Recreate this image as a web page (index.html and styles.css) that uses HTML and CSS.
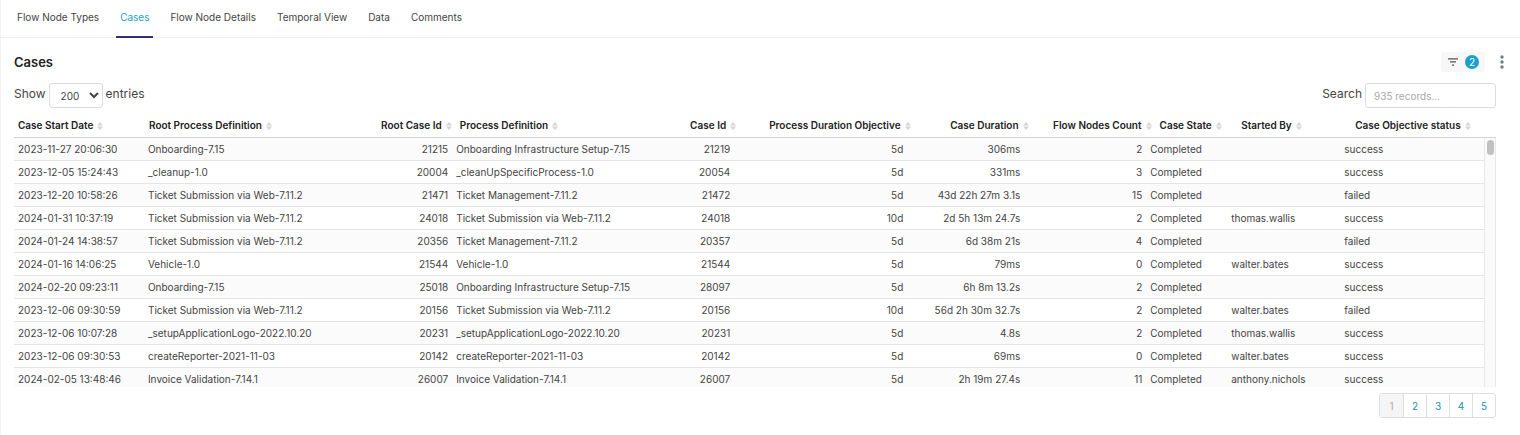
FILE: index.html
```html
<!DOCTYPE html>
<html lang="en">
<head>
<meta charset="utf-8">
<title>Cases</title>
<link rel="stylesheet" href="styles.css">
</head>
<body>
<svg class="defs" aria-hidden="true">
  <symbol id="sort" viewBox="0 0 6 8"><path d="M3 0.1L6 3.5H0zM3 7.9L0 4.5H6z"/></symbol>
</svg>
<nav class="tabs">
  <a class="tab" href="#types">Flow Node Types</a>
  <a class="tab active" href="#cases" aria-current="page">Cases</a>
  <a class="tab" href="#details">Flow Node Details</a>
  <a class="tab" href="#temporal">Temporal View</a>
  <a class="tab" href="#data">Data</a>
  <a class="tab" href="#comments">Comments</a>
</nav>
<main class="panel">
  <header class="panel-head">
    <h1 class="title">Cases</h1>
    <button class="filter" type="button" aria-label="Filters">
      <svg width="10" height="8" viewBox="0 0 10 8"><path d="M0 0.2h10v1.3H0zM2 3.3h6v1.3H2zM4 6.4h2v1.3H4z" fill="#555"/></svg>
      <span class="count">2</span>
    </button>
    <button class="more" type="button" aria-label="More options">
      <svg width="4" height="14" viewBox="0 0 4 14" fill="#6f7d87"><circle cx="2" cy="2" r="1.7"/><circle cx="2" cy="7" r="1.7"/><circle cx="2" cy="12" r="1.7"/></svg>
    </button>
  </header>
  <div class="controls">
    <label class="field">Show <select class="length"><option>200</option></select> entries</label>
    <label class="field">Search <input class="search" type="search" placeholder="935 records..."></label>
  </div>
  <table class="grid grid-head">
    <colgroup><col class="c-date"><col class="c-root"><col class="c-id"><col class="c-proc"><col class="c-id"><col class="c-obj"><col class="c-dur"><col class="c-count"><col class="c-state"><col class="c-by"><col></colgroup>
    <thead><tr>
      <th>Case Start Date<svg class="sort"><use href="#sort"/></svg></th>
      <th>Root Process Definition<svg class="sort"><use href="#sort"/></svg></th>
      <th class="num">Root Case Id<svg class="sort"><use href="#sort"/></svg></th>
      <th>Process Definition<svg class="sort"><use href="#sort"/></svg></th>
      <th class="num">Case Id<svg class="sort"><use href="#sort"/></svg></th>
      <th class="num">Process Duration Objective<svg class="sort"><use href="#sort"/></svg></th>
      <th class="num">Case Duration<svg class="sort"><use href="#sort"/></svg></th>
      <th class="num">Flow Nodes Count<svg class="sort"><use href="#sort"/></svg></th>
      <th>Case State<svg class="sort"><use href="#sort"/></svg></th>
      <th>Started By<svg class="sort"><use href="#sort"/></svg></th>
      <th>Case Objective status<svg class="sort"><use href="#sort"/></svg></th>
    </tr></thead>
  </table>
  <div class="scroll">
    <div class="view">
      <table class="grid grid-body" aria-label="Cases">
        <colgroup><col class="c-date"><col class="c-root"><col class="c-id"><col class="c-proc"><col class="c-id"><col class="c-obj"><col class="c-dur"><col class="c-count"><col class="c-state"><col class="c-by"><col></colgroup>
        <tbody>
          <tr><td>2023-11-27 20:06:30</td><td>Onboarding-7.15</td><td class="num">21215</td><td>Onboarding Infrastructure Setup-7.15</td><td class="num">21219</td><td class="num">5d</td><td class="num">306ms</td><td class="num">2</td><td>Completed</td><td></td><td>success</td></tr>
          <tr><td>2023-12-05 15:24:43</td><td>_cleanup-1.0</td><td class="num">20004</td><td>_cleanUpSpecificProcess-1.0</td><td class="num">20054</td><td class="num">5d</td><td class="num">331ms</td><td class="num">3</td><td>Completed</td><td></td><td>success</td></tr>
          <tr><td>2023-12-20 10:58:26</td><td>Ticket Submission via Web-7.11.2</td><td class="num">21471</td><td>Ticket Management-7.11.2</td><td class="num">21472</td><td class="num">5d</td><td class="num">43d 22h 27m 3.1s</td><td class="num">15</td><td>Completed</td><td></td><td>failed</td></tr>
          <tr><td>2024-01-31 10:37:19</td><td>Ticket Submission via Web-7.11.2</td><td class="num">24018</td><td>Ticket Submission via Web-7.11.2</td><td class="num">24018</td><td class="num">10d</td><td class="num">2d 5h 13m 24.7s</td><td class="num">2</td><td>Completed</td><td>thomas.wallis</td><td>success</td></tr>
          <tr><td>2024-01-24 14:38:57</td><td>Ticket Submission via Web-7.11.2</td><td class="num">20356</td><td>Ticket Management-7.11.2</td><td class="num">20357</td><td class="num">5d</td><td class="num">6d 38m 21s</td><td class="num">4</td><td>Completed</td><td></td><td>failed</td></tr>
          <tr><td>2024-01-16 14:06:25</td><td>Vehicle-1.0</td><td class="num">21544</td><td>Vehicle-1.0</td><td class="num">21544</td><td class="num">5d</td><td class="num">79ms</td><td class="num">0</td><td>Completed</td><td>walter.bates</td><td>success</td></tr>
          <tr><td>2024-02-20 09:23:11</td><td>Onboarding-7.15</td><td class="num">25018</td><td>Onboarding Infrastructure Setup-7.15</td><td class="num">28097</td><td class="num">5d</td><td class="num">6h 8m 13.2s</td><td class="num">2</td><td>Completed</td><td></td><td>success</td></tr>
          <tr><td>2023-12-06 09:30:59</td><td>Ticket Submission via Web-7.11.2</td><td class="num">20156</td><td>Ticket Submission via Web-7.11.2</td><td class="num">20156</td><td class="num">10d</td><td class="num">56d 2h 30m 32.7s</td><td class="num">2</td><td>Completed</td><td>walter.bates</td><td>failed</td></tr>
          <tr><td>2023-12-06 10:07:28</td><td>_setupApplicationLogo-2022.10.20</td><td class="num">20231</td><td>_setupApplicationLogo-2022.10.20</td><td class="num">20231</td><td class="num">5d</td><td class="num">4.8s</td><td class="num">2</td><td>Completed</td><td>thomas.wallis</td><td>success</td></tr>
          <tr><td>2023-12-06 09:30:53</td><td>createReporter-2021-11-03</td><td class="num">20142</td><td>createReporter-2021-11-03</td><td class="num">20142</td><td class="num">5d</td><td class="num">69ms</td><td class="num">0</td><td>Completed</td><td>walter.bates</td><td>success</td></tr>
          <tr><td>2024-02-05 13:48:46</td><td>Invoice Validation-7.14.1</td><td class="num">26007</td><td>Invoice Validation-7.14.1</td><td class="num">26007</td><td class="num">5d</td><td class="num">2h 19m 27.4s</td><td class="num">11</td><td>Completed</td><td>anthony.nichols</td><td>success</td></tr>
        </tbody>
      </table>
    </div>
    <div class="track"><div class="thumb"></div></div>
  </div>
  <nav class="pages" aria-label="Pages">
    <button class="page" type="button" disabled>1</button>
    <button class="page" type="button">2</button>
    <button class="page" type="button">3</button>
    <button class="page" type="button">4</button>
    <button class="page" type="button">5</button>
  </nav>
</main>
</body>
</html>
```
FILE: styles.css
```css
* { box-sizing: border-box; }
body {
  margin: 0;
  background: #fff;
  color: #444;
  font: 10px/14px Inter, "Liberation Sans", sans-serif;
  border-left: 1px solid #f2f2f2;
  min-height: 100vh;
}
.defs { position: absolute; width: 0; height: 0; }
button, input, select { font: inherit; color: inherit; }
button { border: 0; padding: 0; background: none; }

.tabs {
  display: flex;
  gap: 13px;
  padding-left: 12px;
  border-bottom: 1px solid #eee;
}
.tab {
  padding: 10px 4px 12px;
  margin-bottom: -1px;
  border-bottom: 2px solid transparent;
  color: #444;
  text-decoration: none;
}
.tab.active { color: #1ba1c9; border-bottom-color: #312f72; }

.panel { padding: 14px 24px 0 13px; }
.panel-head { display: flex; align-items: center; height: 20px; }
.title { margin: 0; font-size: 13px; font-weight: 600; color: #222; }
.filter {
  display: flex;
  align-items: center;
  gap: 7px;
  height: 20px;
  margin-left: auto;
  padding: 0 6px 0 7px;
  border-radius: 3px;
  background: #f7f7f7;
}
.count {
  width: 14px;
  height: 14px;
  border-radius: 50%;
  background: #1ba1c9;
  color: #fff;
  text-align: center;
}
.more { display: flex; margin: 0 -8px 0 15px; }

.controls { display: flex; justify-content: space-between; margin-top: 11px; }
.field { display: flex; align-items: flex-start; gap: 3px; font-size: 12px; line-height: 22px; }
.length, .search {
  height: 25px;
  border: 1px solid #dcdcdc;
  border-radius: 3px;
  background: #fff;
  font-size: 10px;
  outline: 0;
}
.length { width: 54px; padding: 0 0 0 7px; }
.search { width: 131px; padding: 0 8px; }
.search::placeholder { color: #a8a8a8; }

.grid {
  width: 100%;
  table-layout: fixed;
  border-collapse: separate;
  border-spacing: 0;
  white-space: nowrap;
}
.c-date { width: 8.84%; }
.c-root { width: 15.66%; }
.c-id { width: 5.31%; }
.c-proc { width: 13.88%; }
.c-obj { width: 11.77%; }
.c-dur { width: 7.96%; }
.c-count { width: 8.3%; }
.c-state { width: 5.51%; }
.c-by { width: 7.69%; }
th, td { padding: 4px; text-align: left; }
.num { text-align: right; }
th {
  height: 30px;
  padding-top: 9px;
  border-bottom: 1px solid #d4d4d4;
  color: #222;
  font-weight: 600;
}
.sort { width: 6px; height: 8px; margin-left: 4px; vertical-align: -1px; fill: #d4d4d4; }
td { height: 23px; border-top: 1px solid #e4e4e4; }
tr:first-child td { height: 22px; border-top: 0; }
.grid-body tr:nth-child(odd) { background: #fbfbfb; }

.scroll { display: flex; height: 249px; }
.view { flex: 1; overflow: hidden; }
.track {
  width: 12px;
  padding: 2px 1px;
  border: solid #e8e8e8;
  border-width: 0 1px;
  background: #fafafa;
}
.thumb { width: 7px; height: 15px; margin: 0 auto; border-radius: 4px; background: #c1c1c1; }

.pages {
  display: flex;
  width: fit-content;
  margin: 6px 0 0 auto;
  border: 1px solid #dedede;
  border-radius: 3px;
}
.page { width: 23px; height: 23px; color: #1a8fb0; }
.page:disabled { background: #f5f5f5; color: #aaa; }
.page + .page { border-left: 1px solid #dedede; }
```
